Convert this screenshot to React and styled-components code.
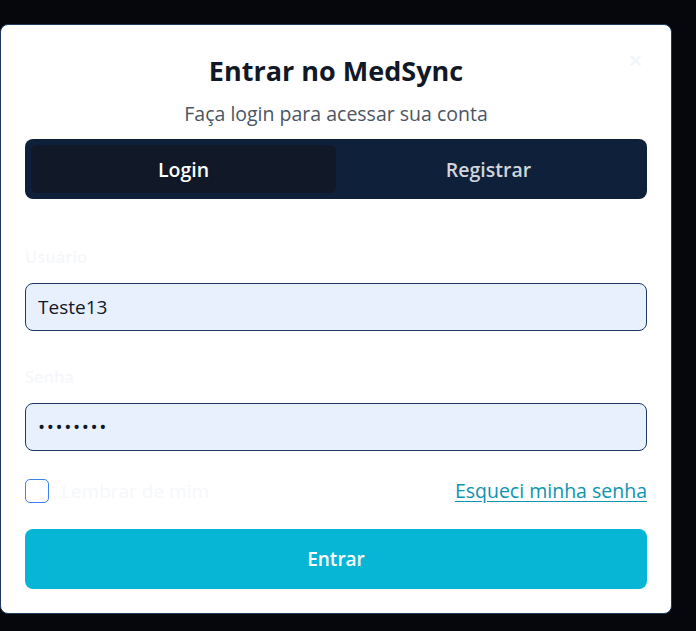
import React, { useState } from "react";
import styled, { createGlobalStyle } from "styled-components";

const GlobalStyle = createGlobalStyle`
  html, body {
    margin: 0;
    padding: 0;
    background: #05070d;
    font-family: "Open Sans", "Noto Sans", "Liberation Sans", sans-serif;
  }
  * { box-sizing: border-box; }
`;

const Page = styled.div`
  width: 696px;
  height: 631px;
  padding-top: 24px;
  background: #05070d;
`;

const Modal = styled.div`
  position: relative;
  width: 672px;
  background: #ffffff;
  border: 1px solid #1e3a5f;
  border-radius: 8px;
  padding: 28px 24px 24px 24px;
  display: flex;
  flex-direction: column;
`;

const Close = styled.button`
  position: absolute;
  top: 27px;
  right: 28px;
  background: none;
  border: none;
  padding: 0;
  color: #eef4f6;
  font-size: 18px;
  line-height: 1;
  cursor: pointer;
`;

const Title = styled.h2`
  margin: 0;
  text-align: center;
  font-size: 27px;
  font-weight: 700;
  color: #111827;
  line-height: 36px;
`;

const Subtitle = styled.p`
  margin: 12px 0 12px 0;
  text-align: center;
  font-size: 19.5px;
  color: #4b5563;
  line-height: 26px;
`;

const Tabs = styled.div`
  display: grid;
  grid-template-columns: 1fr 1fr;
  background: #0f213a;
  border-radius: 8px;
  padding: 6px;
  height: 60px;
`;

const Tab = styled.button`
  border: none;
  border-radius: 6px;
  background: ${(p) => (p.$active ? "#111827" : "transparent")};
  color: ${(p) => (p.$active ? "#ffffff" : "#d1d5db")};
  font-family: inherit;
  font-size: 19.5px;
  font-weight: 600;
  cursor: pointer;
`;

const Form = styled.form`
  display: flex;
  flex-direction: column;
  margin-top: 47px;
`;

const Field = styled.div`
  display: flex;
  flex-direction: column;
  gap: 15px;
  margin-bottom: 35px;
`;

const Label = styled.label`
  font-size: 16.5px;
  font-weight: 600;
  color: #f5f7fa;
  line-height: 22px;
`;

const Input = styled.input`
  height: 48px;
  border: 1px solid #1e3a5f;
  border-radius: 8px;
  background: #e8f0fe;
  padding: 0 12px;
  font-family: inherit;
  font-size: 19px;
  color: #111827;
  outline: none;
  letter-spacing: ${(p) => (p.type === "password" ? "1.6px" : "0")};
`;

const OptionsRow = styled.div`
  display: flex;
  justify-content: space-between;
  align-items: center;
  height: 27px;
  margin-top: -9px;
`;

const Remember = styled.label`
  display: flex;
  align-items: center;
  gap: 12px;
  font-size: 19px;
  color: #f5f7fa;
`;

const Box = styled.span`
  width: 24px;
  height: 24px;
  border: 1.5px solid #3b82f6;
  border-radius: 5px;
  display: inline-block;
`;

const ForgotLink = styled.a`
  color: #0e93b0;
  font-size: 19.5px;
  text-decoration: underline;
  text-underline-offset: 3px;
  cursor: pointer;
`;

const Submit = styled.button`
  margin-top: 25px;
  height: 60px;
  border: none;
  border-radius: 8px;
  background: #06b6d4;
  color: #ffffff;
  font-family: inherit;
  font-size: 19px;
  font-weight: 600;
  cursor: pointer;
`;

export default function App() {
  const [tab, setTab] = useState("login");
  return (
    <Page>
      <GlobalStyle />
      <Modal>
        <Close aria-label="Fechar">✕</Close>
        <Title>Entrar no MedSync</Title>
        <Subtitle>Faça login para acessar sua conta</Subtitle>
        <Tabs>
          <Tab $active={tab === "login"} onClick={() => setTab("login")}>
            Login
          </Tab>
          <Tab $active={tab === "register"} onClick={() => setTab("register")}>
            Registrar
          </Tab>
        </Tabs>
        <Form onSubmit={(e) => e.preventDefault()}>
          <Field>
            <Label>Usuário</Label>
            <Input defaultValue="Teste13" />
          </Field>
          <Field>
            <Label>Senha</Label>
            <Input type="password" defaultValue="12345678" />
          </Field>
          <OptionsRow>
            <Remember>
              <Box />
              Lembrar de mim
            </Remember>
            <ForgotLink>Esqueci minha senha</ForgotLink>
          </OptionsRow>
          <Submit type="submit">Entrar</Submit>
        </Form>
      </Modal>
    </Page>
  );
}
